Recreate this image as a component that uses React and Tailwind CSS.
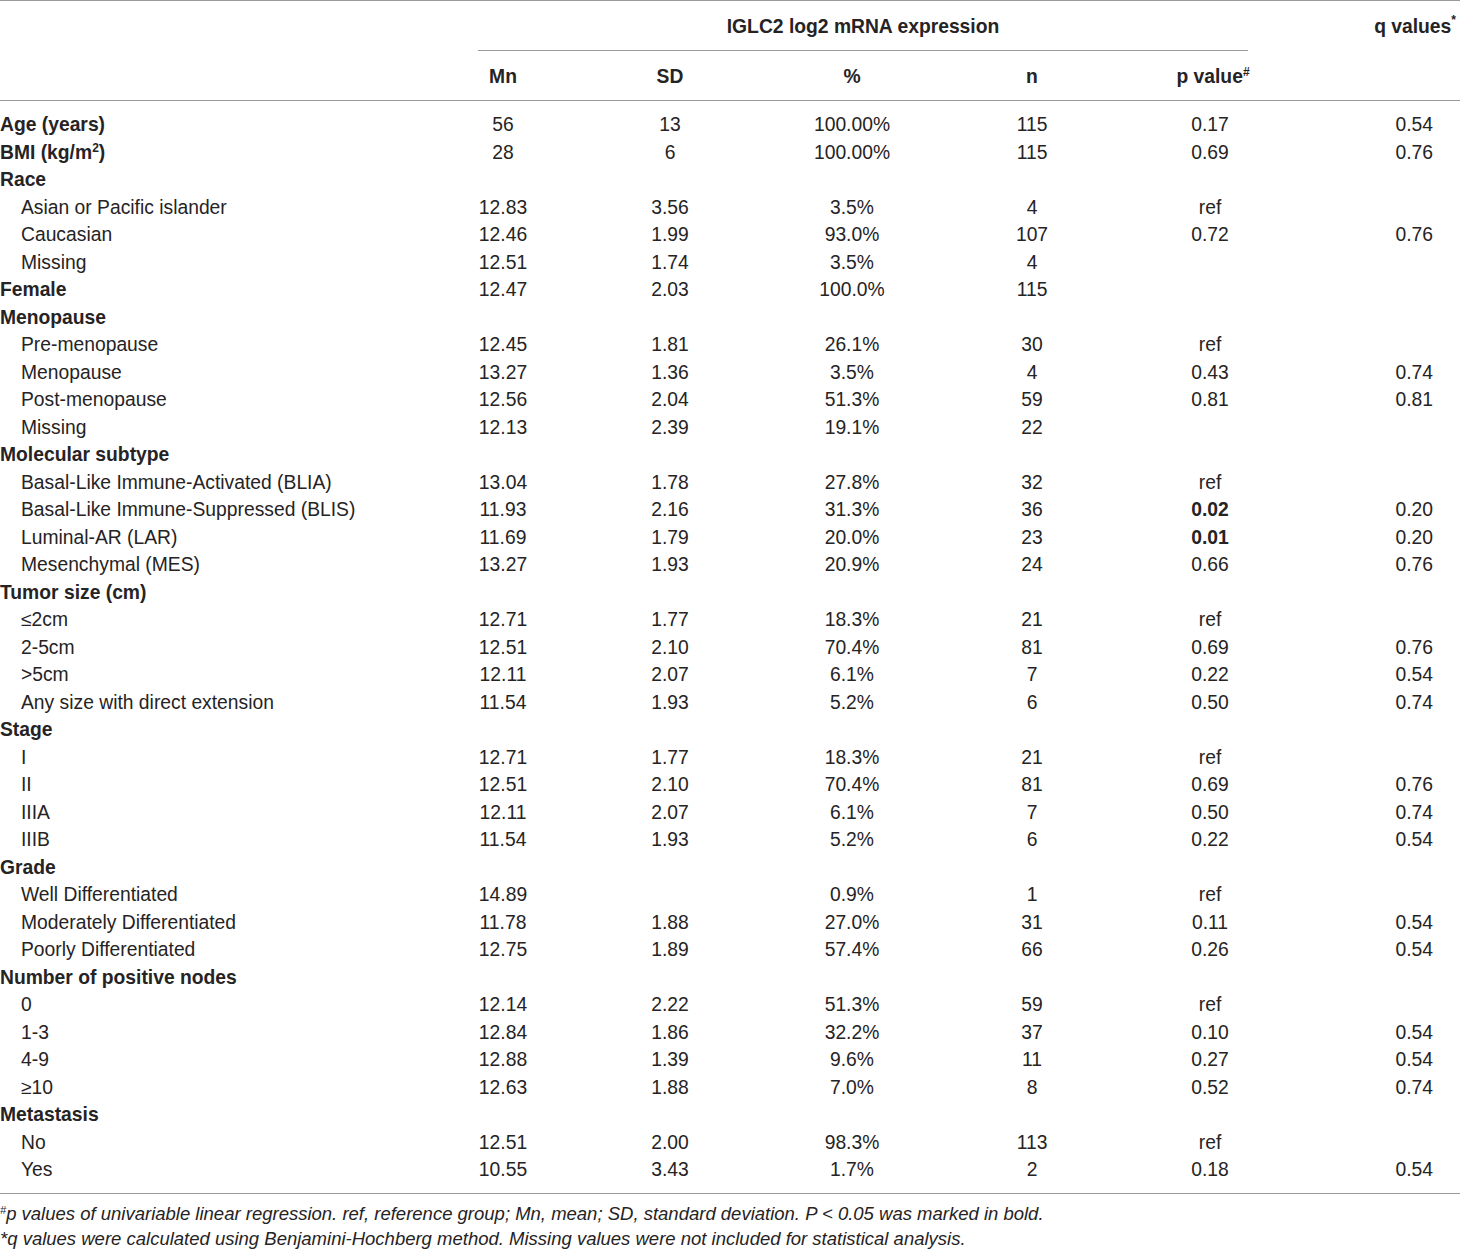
const rows = [
    {label: 'Age (years)', head: true, v: ['56', '13', '100.00%', '115', '0.17', '0.54']},
    {label: 'BMI', sup: true, head: true, v: ['28', '6', '100.00%', '115', '0.69', '0.76']},
    {label: 'Race', head: true},
    {label: 'Asian or Pacific islander', v: ['12.83', '3.56', '3.5%', '4', 'ref', '']},
    {label: 'Caucasian', v: ['12.46', '1.99', '93.0%', '107', '0.72', '0.76']},
    {label: 'Missing', v: ['12.51', '1.74', '3.5%', '4', '', '']},
    {label: 'Female', head: true, v: ['12.47', '2.03', '100.0%', '115', '', '']},
    {label: 'Menopause', head: true},
    {label: 'Pre-menopause', v: ['12.45', '1.81', '26.1%', '30', 'ref', '']},
    {label: 'Menopause', v: ['13.27', '1.36', '3.5%', '4', '0.43', '0.74']},
    {label: 'Post-menopause', v: ['12.56', '2.04', '51.3%', '59', '0.81', '0.81']},
    {label: 'Missing', v: ['12.13', '2.39', '19.1%', '22', '', '']},
    {label: 'Molecular subtype', head: true},
    {label: 'Basal-Like Immune-Activated (BLIA)', v: ['13.04', '1.78', '27.8%', '32', 'ref', '']},
    {label: 'Basal-Like Immune-Suppressed (BLIS)', v: ['11.93', '2.16', '31.3%', '36', '0.02', '0.20'], bold: true},
    {label: 'Luminal-AR (LAR)', v: ['11.69', '1.79', '20.0%', '23', '0.01', '0.20'], bold: true},
    {label: 'Mesenchymal (MES)', v: ['13.27', '1.93', '20.9%', '24', '0.66', '0.76']},
    {label: 'Tumor size (cm)', head: true},
    {label: '≤2cm', v: ['12.71', '1.77', '18.3%', '21', 'ref', '']},
    {label: '2-5cm', v: ['12.51', '2.10', '70.4%', '81', '0.69', '0.76']},
    {label: '>5cm', v: ['12.11', '2.07', '6.1%', '7', '0.22', '0.54']},
    {label: 'Any size with direct extension', v: ['11.54', '1.93', '5.2%', '6', '0.50', '0.74']},
    {label: 'Stage', head: true},
    {label: 'I', v: ['12.71', '1.77', '18.3%', '21', 'ref', '']},
    {label: 'II', v: ['12.51', '2.10', '70.4%', '81', '0.69', '0.76']},
    {label: 'IIIA', v: ['12.11', '2.07', '6.1%', '7', '0.50', '0.74']},
    {label: 'IIIB', v: ['11.54', '1.93', '5.2%', '6', '0.22', '0.54']},
    {label: 'Grade', head: true},
    {label: 'Well Differentiated', v: ['14.89', '', '0.9%', '1', 'ref', '']},
    {label: 'Moderately Differentiated', v: ['11.78', '1.88', '27.0%', '31', '0.11', '0.54']},
    {label: 'Poorly Differentiated', v: ['12.75', '1.89', '57.4%', '66', '0.26', '0.54']},
    {label: 'Number of positive nodes', head: true},
    {label: '0', v: ['12.14', '2.22', '51.3%', '59', 'ref', '']},
    {label: '1-3', v: ['12.84', '1.86', '32.2%', '37', '0.10', '0.54']},
    {label: '4-9', v: ['12.88', '1.39', '9.6%', '11', '0.27', '0.54']},
    {label: '≥10', v: ['12.63', '1.88', '7.0%', '8', '0.52', '0.74']},
    {label: 'Metastasis', head: true},
    {label: 'No', v: ['12.51', '2.00', '98.3%', '113', 'ref', '']},
    {label: 'Yes', v: ['10.55', '3.43', '1.7%', '2', '0.18', '0.54']},
];

const grid = 'grid grid-cols-[420px_166px_168px_196px_164px_192px_154px]';

function Row({row}) {
    const v = row.v || ['', '', '', '', '', ''];
    return (
        <div className={`${grid} h-[27.5px] items-center`}>
            <div className={row.head ? 'font-bold' : 'pl-[21px]'}>
                {row.label}
                {row.sup && <> (kg/m<sup className="text-[12px] top-[-7px]">2</sup>)</>}
            </div>
            <div className="text-center">{v[0]}</div>
            <div className="text-center">{v[1]}</div>
            <div className="text-center">{v[2]}</div>
            <div className="text-center">{v[3]}</div>
            <div className={`text-center ${row.bold ? 'font-bold' : ''}`}>{v[4]}</div>
            <div className="text-right pr-[27px]">{v[5]}</div>
        </div>
    );
}

export default function App() {
    return (
        <div className="w-[1460px] min-h-[1250px] bg-white text-[#262324] text-[19.3px] leading-none font-['Liberation_Sans',Arial,sans-serif]">
            <div className="border-t border-[#9a9a9a]">
                <div className={`${grid} h-[50px]`}>
                    <div></div>
                    <div className="col-span-5 flex flex-col items-center">
                        <div className="h-[49px] flex items-center pt-[2px] font-bold">IGLC2 log2 mRNA expression</div>
                        <div className="w-[770px] h-px bg-[#9a9a9a]"></div>
                    </div>
                    <div className="flex items-center justify-end pr-[4px] pt-[2px] font-bold">
                        q values<sup className="text-[12px] top-[-7px]">*</sup>
                    </div>
                </div>
                <div className={`${grid} h-[50px] items-center pt-[2px] font-bold border-b border-[#9a9a9a]`}>
                    <div></div>
                    <div className="text-center">Mn</div>
                    <div className="text-center">SD</div>
                    <div className="text-center">%</div>
                    <div className="text-center">n</div>
                    <div className="text-center pl-[6px]">p value<sup className="text-[12px] top-[-7px]">#</sup></div>
                    <div></div>
                </div>
            </div>

            <div className="pt-[10px] pb-[9px] border-b border-[#9a9a9a]">
                {rows.map((row, i) => <Row key={i} row={row}/>)}
            </div>

            <div className="pt-[7px] italic text-[18.5px] leading-[25px]">
                <div><sup className="text-[11px] top-[-6px]">#</sup>p values of univariable linear regression. ref, reference group; Mn, mean; SD, standard deviation. P &lt; 0.05 was marked in bold.</div>
                <div>*q values were calculated using Benjamini-Hochberg method. Missing values were not included for statistical analysis.</div>
            </div>
        </div>
    );
}
